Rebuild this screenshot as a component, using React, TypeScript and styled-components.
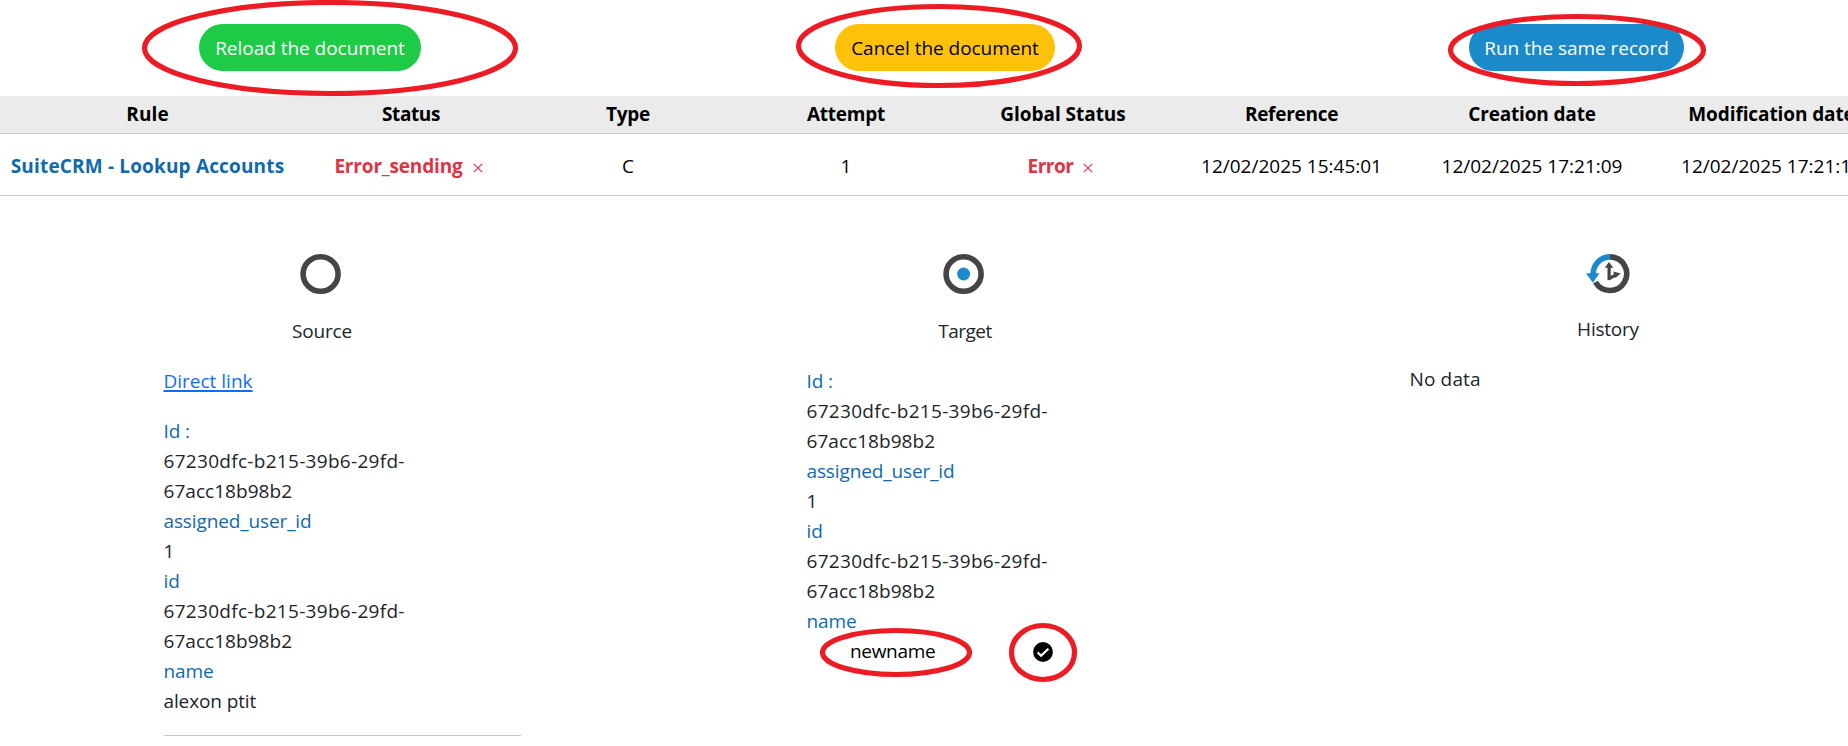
import React from 'react';
import styled, { createGlobalStyle } from 'styled-components';

const GlobalStyle = createGlobalStyle`
  * { box-sizing: border-box; }
  html, body { margin: 0; padding: 0; overflow: hidden; background: #fff; }
  body {
    font-family: "Open Sans", "Noto Sans", sans-serif;
    font-size: 19px;
    line-height: 30px;
    color: #212529;
  }
`;

const Page = styled.main`
  position: relative;
  width: 1848px;
  height: 746px;
  overflow: hidden;
`;

const Actions = styled.div`
  display: grid;
  grid-template-columns: 620px 650px 578px;
  height: 96px;
  padding-top: 24px;
`;

const ActionCell = styled.div<{ $shift?: number }>`
  display: flex;
  justify-content: center;
  align-items: flex-start;
  padding-left: ${(p) => p.$shift ?? 0}px;
`;

const ActionButton = styled.button<{ $bg: string; $fg: string; $width: number }>`
  width: ${(p) => p.$width}px;
  height: 47px;
  padding: 0;
  border: 0;
  border-radius: 24px;
  background: ${(p) => p.$bg};
  color: ${(p) => p.$fg};
  font: inherit;
  letter-spacing: -0.03px;
  white-space: nowrap;
`;

const DocumentTable = styled.div`
  width: 1899px;
`;

const TableRow = styled.div<{ $head?: boolean }>`
  display: grid;
  grid-template-columns: 295px 232px 202px 234px 200px 257px 224px 255px;
  align-items: start;
  height: ${(p) => (p.$head ? 38 : 62)}px;
  padding-top: ${(p) => (p.$head ? 3 : 17)}px;
  border-bottom: 1px solid #c8c9ca;
  background: ${(p) => (p.$head ? '#ebebeb' : '#fff')};
  color: #000;
  font-weight: ${(p) => (p.$head ? 700 : 400)};
`;

const Cell = styled.div<{ $track?: number }>`
  display: flex;
  justify-content: center;
  white-space: nowrap;
  letter-spacing: ${(p) => p.$track ?? 0}px;
`;

const RuleName = styled.a`
  color: #1169ad;
  font-weight: 700;
  letter-spacing: 0.16px;
`;

const ErrorLabel = styled.span<{ $track: number }>`
  display: flex;
  align-items: center;
  gap: 10px;
  padding-right: 5px;
  color: #dc3545;
  font-weight: 700;
  letter-spacing: ${(p) => p.$track}px;

  svg { margin-top: 4px; }
`;

const Columns = styled.div`
  display: grid;
  grid-template-columns: repeat(3, 643px);
  width: 1929px;
`;

const Column = styled.section`
  padding: 58px 122px 0 163.5px;
`;

const ColumnHead = styled.header<{ $height?: number }>`
  display: flex;
  flex-direction: column;
  align-items: center;
  width: 315px;
  height: ${(p) => p.$height ?? 112}px;

  svg { display: block; }
`;

const ColumnTitle = styled.div<{ $track: number; $top?: number }>`
  margin-top: ${(p) => p.$top ?? 22}px;
  padding-left: 2px;
  letter-spacing: ${(p) => p.$track}px;
`;

const DirectLink = styled.a`
  display: block;
  margin-bottom: 20px;
  color: #0d6efd;
  text-decoration: underline;
  text-decoration-thickness: 2px;
  text-underline-offset: 2px;
`;

const Fields = styled.div`
  width: 257px;
`;

const FieldName = styled.div`
  color: #1169ad;
  letter-spacing: -0.12px;
`;

const FieldValue = styled.div<{ $track?: number }>`
  letter-spacing: ${(p) => p.$track ?? 0}px;
`;

const EditedValue = styled.div`
  display: flex;
  align-items: center;
  width: 246.5px;
  padding-left: 43.5px;
  justify-content: space-between;
  color: #000;
  letter-spacing: -0.31px;

  svg { margin-top: 1px; }
`;

const Rule = styled.hr`
  width: 357px;
  margin: 19px 0 0;
  border: 0;
  border-top: 1px solid #c6c7c8;
`;

const EmptyNote = styled.div`
  margin-left: -40px;
  letter-spacing: 0.15px;
`;

const HighlightLayer = styled.svg`
  position: absolute;
  left: 0;
  top: 0;
  pointer-events: none;
`;

const CrossIcon = () => (
  <svg width="10" height="10" viewBox="0 0 10 10" fill="none" stroke="#dc3545" strokeWidth="1.2">
    <path d="M0.8 0.8 9.2 9.2M9.2 0.8 0.8 9.2" />
  </svg>
);

const CircleIcon = ({ dot = false }: { dot?: boolean }) => (
  <svg width="42" height="40" viewBox="0 0 42 40">
    <ellipse cx="20.6" cy="20" rx="17.5" ry="17.2" fill="none" stroke="#454547" strokeWidth="5.6" />
    {dot && <circle cx="20.6" cy="20" r="6.5" fill="#1a8acb" />}
  </svg>
);

const HistoryIcon = () => (
  <svg width="46" height="40" viewBox="0 0 46 40">
    <path d="M26 2.9A16.8 16.8 0 1 1 11.4 28.2" fill="none" stroke="#454547" strokeWidth="5.6" />
    <path d="M26 2.9A16.8 16.8 0 0 0 9.2 20" fill="none" stroke="#1a8acb" strokeWidth="5.6" />
    <path d="M2 19.3H15.4L8.9 28.8Z" fill="#1a8acb" />
    <path d="M25.1 26V13M24.2 25.2 31 21.4" fill="none" stroke="#454547" strokeWidth="3.2" />
    <path d="M20.8 13.8 25 8 29.4 13.8ZM29.2 17.6 36.8 19.6 31.4 24Z" fill="#454547" />
  </svg>
);

const CheckIcon = () => (
  <svg width="20" height="20" viewBox="0 0 20 20">
    <circle cx="10" cy="10" r="9.9" fill="#000" />
    <path d="M4.6 10.4 8.1 13.7 15.4 6.7" fill="none" stroke="#fff" strokeWidth="2.2" />
  </svg>
);

const RECORD_ID = '67230dfc-b215-39b6-29fd-';
const RECORD_ID_END = '67acc18b98b2';

const RecordId = () => (
  <>
    <FieldValue $track={0.3}>{RECORD_ID}</FieldValue>
    <FieldValue $track={0.04}>{RECORD_ID_END}</FieldValue>
  </>
);

const RecordFields = () => (
  <>
    <FieldName>Id :</FieldName>
    <RecordId />
    <FieldName>assigned_user_id</FieldName>
    <FieldValue>1</FieldValue>
    <FieldName>id</FieldName>
    <RecordId />
    <FieldName>name</FieldName>
  </>
);

const headings: [string, number][] = [
  ['Rule', 0.09],
  ['Status', -0.4],
  ['Type', -0.3],
  ['Attempt', -0.25],
  ['Global Status', -0.04],
  ['Reference', -0.28],
  ['Creation date', -0.16],
  ['Modification date', -0.1],
];

const highlights = [
  { cx: 330, cy: 48, rx: 185.5, ry: 45.5 },
  { cx: 939, cy: 46, rx: 140.5, ry: 39.5 },
  { cx: 1577, cy: 50, rx: 126.5, ry: 33.5 },
  { cx: 896, cy: 652.5, rx: 73.5, ry: 22 },
  { cx: 1043, cy: 652.5, rx: 31.5, ry: 27 },
];

export default function App() {
  return (
    <Page>
      <GlobalStyle />
      <Actions>
        <ActionCell>
          <ActionButton $bg="#1dcb46" $fg="#fff" $width={222}>Reload the document</ActionButton>
        </ActionCell>
        <ActionCell>
          <ActionButton $bg="#ffc10a" $fg="#000" $width={220}>Cancel the document</ActionButton>
        </ActionCell>
        <ActionCell $shift={35}>
          <ActionButton $bg="#1a8acb" $fg="#fff" $width={215}>Run the same record</ActionButton>
        </ActionCell>
      </Actions>

      <DocumentTable>
        <TableRow $head>
          {headings.map(([label, track]) => (
            <Cell key={label} $track={track}>{label}</Cell>
          ))}
        </TableRow>
        <TableRow>
          <Cell><RuleName>SuiteCRM - Lookup Accounts</RuleName></Cell>
          <Cell><ErrorLabel $track={-0.16}>Error_sending<CrossIcon /></ErrorLabel></Cell>
          <Cell>C</Cell>
          <Cell>1</Cell>
          <Cell><ErrorLabel $track={-0.5}>Error<CrossIcon /></ErrorLabel></Cell>
          <Cell>12/02/2025 15:45:01</Cell>
          <Cell>12/02/2025 17:21:09</Cell>
          <Cell>12/02/2025 17:21:10</Cell>
        </TableRow>
      </DocumentTable>

      <Columns>
        <Column>
          <ColumnHead>
            <CircleIcon />
            <ColumnTitle $track={-0.17}>Source</ColumnTitle>
          </ColumnHead>
          <DirectLink>Direct link</DirectLink>
          <Fields>
            <RecordFields />
            <FieldValue $track={-0.12}>alexon ptit</FieldValue>
          </Fields>
          <Rule />
        </Column>
        <Column>
          <ColumnHead>
            <CircleIcon dot />
            <ColumnTitle $track={-0.5}>Target</ColumnTitle>
          </ColumnHead>
          <Fields>
            <RecordFields />
            <EditedValue>newname<CheckIcon /></EditedValue>
          </Fields>
        </Column>
        <Column>
          <ColumnHead $height={110}>
            <HistoryIcon />
            <ColumnTitle $track={-0.22} $top={20}>History</ColumnTitle>
          </ColumnHead>
          <EmptyNote>No data</EmptyNote>
        </Column>
      </Columns>

      <HighlightLayer width="1848" height="746" viewBox="0 0 1848 746" fill="none" stroke="#ed1c24" strokeWidth="5.2">
        {highlights.map((h) => (
          <ellipse key={h.cx} {...h} />
        ))}
      </HighlightLayer>
    </Page>
  );
}
